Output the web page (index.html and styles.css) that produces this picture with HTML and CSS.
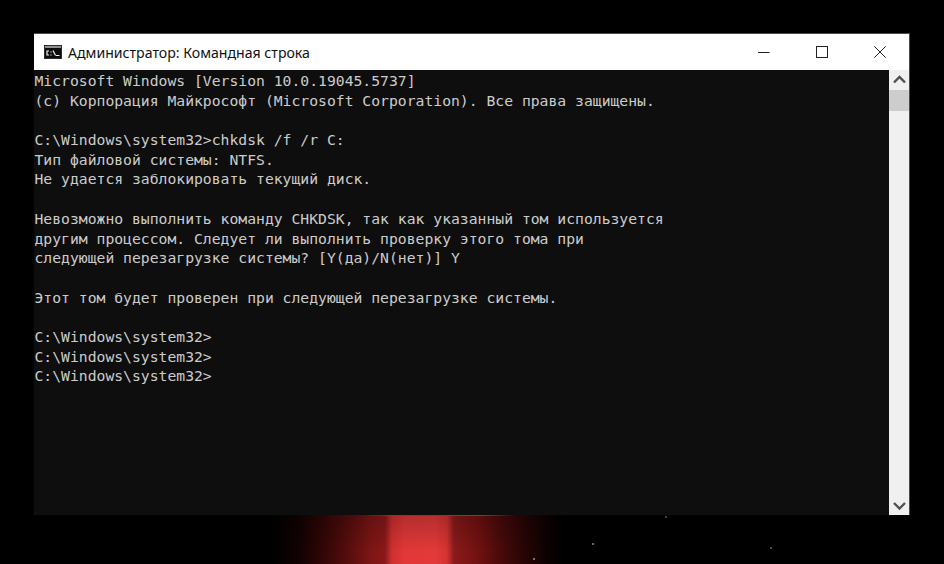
FILE: index.html
```html
<!DOCTYPE html>
<html lang="ru">
<head>
<meta charset="utf-8">
<title>Администратор: Командная строка</title>
<link rel="stylesheet" href="styles.css">
</head>
<body>
<div class="window">
  <header class="titlebar">
    <svg class="app-icon" width="18" height="14" viewBox="0 0 18 14">
      <rect width="18" height="14" fill="#2e2e2e"/>
      <rect x="1" y="3" width="16" height="10" fill="#0c0c0c"/>
      <rect x="1" y="1" width="16" height="2" fill="#8f8f8f"/>
      <path d="M5 6H3V10H5M7 6.5V7.5M7 9.5V10.5M9 5.5L11.5 10.5M12 10.5H15.5" fill="none" stroke="#f2f2f2" stroke-width="1.2"/>
    </svg>
    <span class="title">Администратор: Командная строка</span>
    <div class="controls">
      <button class="ctl" aria-label="Свернуть"><svg width="12" height="12" viewBox="0 0 12 12"><path d="M0 6.5H11.5" stroke="#222" stroke-width="1" fill="none"/></svg></button>
      <button class="ctl" aria-label="Развернуть"><svg width="12" height="12" viewBox="0 0 12 12"><rect x=".5" y=".5" width="11" height="11" stroke="#222" stroke-width="1" fill="none"/></svg></button>
      <button class="ctl" aria-label="Закрыть"><svg width="12" height="12" viewBox="0 0 12 12"><path d="M.3.3L11.7 11.7M11.7.3L.3 11.7" stroke="#222" stroke-width="1" fill="none"/></svg></button>
    </div>
  </header>
  <div class="body">
    <pre class="console">Microsoft Windows [Version 10.0.19045.5737]
(c) Корпорация Майкрософт (Microsoft Corporation). Все права защищены.

C:\Windows\system32&gt;chkdsk /f /r C:
Тип файловой системы: NTFS.
Не удается заблокировать текущий диск.

Невозможно выполнить команду CHKDSK, так как указанный том используется
другим процессом. Следует ли выполнить проверку этого тома при
следующей перезагрузке системы? [Y(да)/N(нет)] Y

Этот том будет проверен при следующей перезагрузке системы.

C:\Windows\system32&gt;
C:\Windows\system32&gt;
C:\Windows\system32&gt;</pre>
    <div class="scrollbar">
      <svg class="arrow" width="20" height="20" viewBox="0 0 20 20"><path d="M5 12.5L10.5 7L16 12.5" fill="none" stroke="#505050" stroke-width="2.4"/></svg>
      <div class="thumb"></div>
      <div class="track"></div>
      <svg class="arrow" width="20" height="20" viewBox="0 0 20 20"><path d="M5 8L10.5 13.5L16 8" fill="none" stroke="#505050" stroke-width="2.4"/></svg>
    </div>
  </div>
</div>
<div class="glow"></div>
<i class="star s1"></i><i class="star s2"></i><i class="star s3"></i><i class="star s4"></i>
</body>
</html>
```
FILE: styles.css
```css
html, body { margin: 0; height: 100%; background: #000; overflow: hidden; }
body { padding: 33px 34px 0; box-sizing: border-box; position: relative; }

.window {
  width: 876px; height: 482px;
  box-sizing: border-box;
  border: 1px solid #4a4a4a;
  border-bottom: 0;
  border-left: 0;
  display: flex; flex-direction: column;
  position: relative; z-index: 1;
}
.titlebar {
  height: 36px; flex: none;
  background: #fff;
  display: flex; align-items: center;
  padding-left: 10px;
}
.app-icon { flex: none; }
.title {
  margin-left: 6px; margin-top: 1px;
  font: 14.12px/20px "Noto Sans", sans-serif;
  color: #111;
}
.controls { margin-left: auto; display: flex; height: 100%; }
.ctl {
  width: 58px; height: 100%;
  border: 0; padding: 0; background: none;
  display: flex; align-items: center; justify-content: center;
}
.body { flex: 1; display: flex; min-height: 0; }
.console {
  flex: 1; margin: 0; padding: 1px 0 0 .5px;
  background: #0e0e0e;
  color: #cccccc;
  font: 14.73px/19.68px "DejaVu Sans Mono", monospace;
}
.scrollbar {
  width: 20px; flex: none;
  background: #f0f0f0;
  display: flex; flex-direction: column;
}
.arrow { flex: none; display: block; }
.thumb { height: 21px; flex: none; background: #cdcdcd; }
.track { flex: 1; }

.glow {
  position: absolute; left: 270px; top: 515px; width: 300px; height: 49px;
  background:
    linear-gradient(to right, rgba(168,42,42,0) 95px, #a82a2a 130px, #a82a2a 210px, rgba(168,42,42,0) 245px) top / 100% 1px no-repeat,
    linear-gradient(to bottom, rgba(0,0,0,.2), rgba(0,0,0,0) 75%),
    linear-gradient(to right,
      rgba(0,0,0,0) 0,
      #120202 30px,
      #2e0505 50px,
      #520c0c 75px,
      #7c1515 100px,
      #8a1818 115px,
      #d03030 122px,
      #e23838 135px,
      #e43939 165px,
      #d43232 177px,
      #8a1a1a 184px,
      #761212 205px,
      #4a0a0a 230px,
      #260404 255px,
      #0c0101 278px,
      rgba(0,0,0,0) 295px);
}
.star {
  position: absolute; width: 2px; height: 2px; border-radius: 50%;
  background: #9a9a9a;
}
.s1 { left: 533px; top: 558px; }
.s2 { left: 592px; top: 543px; background: #888; }
.s3 { left: 665px; top: 516px; background: #555; }
.s4 { left: 770px; top: 547px; background: #666; }
```
